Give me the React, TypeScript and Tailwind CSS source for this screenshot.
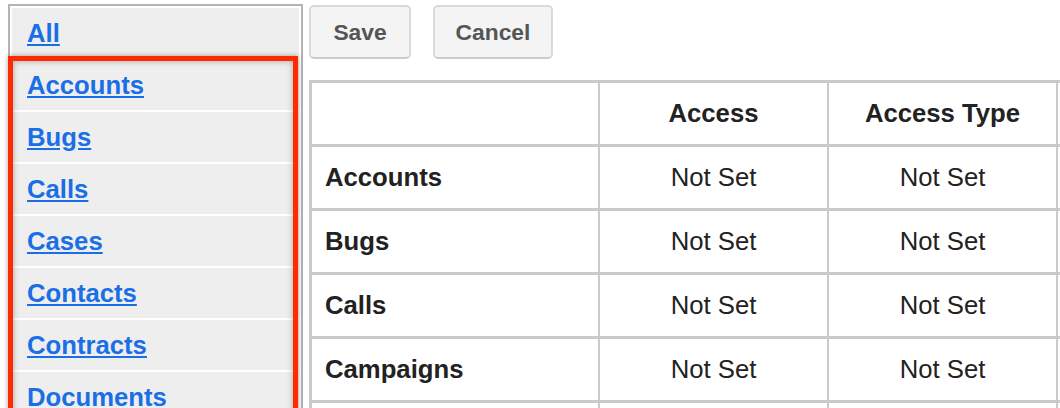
import React from 'react';

const modules = ['Accounts', 'Bugs', 'Calls', 'Cases', 'Contacts', 'Contracts', 'Documents'];

const rows = ['Accounts', 'Bugs', 'Calls', 'Campaigns', 'Cases'];

const App: React.FC = () => {
    return (
        <div
            className="flex h-[408px] w-[1060px] overflow-hidden bg-white pl-[8px] pt-[4px]"
            style={{ fontFamily: '"Liberation Sans", Arial, sans-serif' }}
        >
            {/* Module list */}
            <div className="relative w-[295px] shrink-0 self-start border-2 border-[#b4b4b4] bg-white p-[2px]">
                <div className="flex flex-col gap-[2px]">
                    <div className="flex h-[50px] items-center bg-[#eeeeee] pl-[15px]">
                        <a href="#" className="text-[25.7px] font-bold text-[#1a6fe6] underline underline-offset-2">All</a>
                    </div>
                    {modules.map(m => (
                        <div key={m} className="flex h-[50px] items-center bg-[#eeeeee] pl-[15px]">
                            <a href="#" className="text-[25.7px] font-bold text-[#1a6fe6] underline underline-offset-2">{m}</a>
                        </div>
                    ))}
                </div>

                {/* Highlight annotation */}
                <div className="pointer-events-none absolute left-[-2px] top-[50px] h-[400px] w-[290px] border-[5px] border-[#ff2a00] shadow-[0_0_5px_rgba(0,0,0,0.35),inset_0_0_6px_rgba(0,0,0,0.3)]" />
            </div>

            {/* Right side */}
            <div className="ml-[6px] flex flex-col">
                <div className="flex h-[54px] items-stretch gap-[22px] pt-[1px]">
                    <button className="h-[54px] w-[102px] rounded-[5px] border-2 border-[#dadada] border-b-[#cccccc] bg-[#f4f4f4] text-[22.8px] font-bold text-[#555555]">
                        Save
                    </button>
                    <button className="h-[54px] w-[120px] rounded-[5px] border-2 border-[#dadada] border-b-[#cccccc] bg-[#f4f4f4] text-[22.8px] font-bold text-[#555555]">
                        Cancel
                    </button>
                </div>

                <div className="mt-[22px] w-[1000px] border-l-[3px] border-t-[3px] border-[#cacaca] text-[25.7px] text-[#222222]">
                    <div className="flex h-[64px] border-b-[3px] border-[#cacaca]">
                        <div className="w-[288px] shrink-0 border-r-2 border-[#cacaca]" />
                        <div className="flex w-[229px] shrink-0 items-center justify-center border-r-2 border-[#cacaca] font-bold">Access</div>
                        <div className="flex w-[229px] shrink-0 items-center justify-center border-r-2 border-[#cacaca] font-bold">Access Type</div>
                        <div className="w-[229px] shrink-0" />
                    </div>
                    {rows.map(r => (
                        <div key={r} className="flex h-[64px] border-b-[3px] border-[#cacaca]">
                            <div className="flex w-[288px] shrink-0 items-center border-r-2 border-[#cacaca] pl-[13px] font-bold">{r}</div>
                            <div className="flex w-[229px] shrink-0 items-center justify-center border-r-2 border-[#cacaca]">Not Set</div>
                            <div className="flex w-[229px] shrink-0 items-center justify-center border-r-2 border-[#cacaca]">Not Set</div>
                            <div className="w-[229px] shrink-0" />
                        </div>
                    ))}
                </div>
            </div>
        </div>
    );
};

export default App;
